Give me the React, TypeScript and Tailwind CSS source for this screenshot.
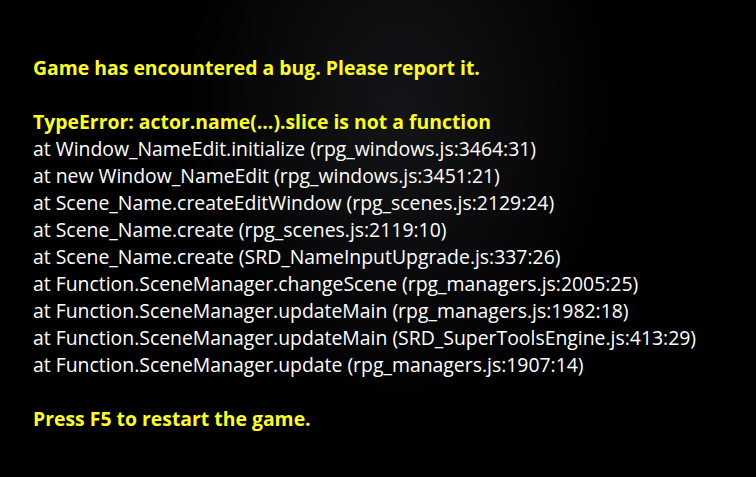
export default function App() {
  const stack = [
    "at Window_NameEdit.initialize (rpg_windows.js:3464:31)",
    "at new Window_NameEdit (rpg_windows.js:3451:21)",
    "at Scene_Name.createEditWindow (rpg_scenes.js:2129:24)",
    "at Scene_Name.create (rpg_scenes.js:2119:10)",
    "at Scene_Name.create (SRD_NameInputUpgrade.js:337:26)",
    "at Function.SceneManager.changeScene (rpg_managers.js:2005:25)",
    "at Function.SceneManager.updateMain (rpg_managers.js:1982:18)",
    "at Function.SceneManager.updateMain (SRD_SuperToolsEngine.js:413:29)",
    "at Function.SceneManager.update (rpg_managers.js:1907:14)",
  ];

  return (
    <div className="w-full h-screen overflow-hidden bg-black bg-[radial-gradient(ellipse_220px_300px_at_400px_110px,#141518_0%,#0a0a0c_55%,#000_100%)] font-['Open_Sans',sans-serif] text-[19.4px] leading-[27px]">
      <div className="flex flex-col pl-[33px] pt-[54px]">
        {/* error header */}
        <div className="text-[#ffff1e] font-bold">Game has encountered a bug. Please report it.</div>
        <div className="h-[27px]" />

        <div className="text-[#ffff1e] font-bold">TypeError: actor.name(...).slice is not a function</div>
        <div className="flex flex-col text-white">
          {stack.map((line, i) => (
            <div key={i}>{line}</div>
          ))}
        </div>
        <div className="h-[27px]" />

        <div className="text-[#ffff1e] font-bold">Press F5 to restart the game.</div>
      </div>
    </div>
  );
}
